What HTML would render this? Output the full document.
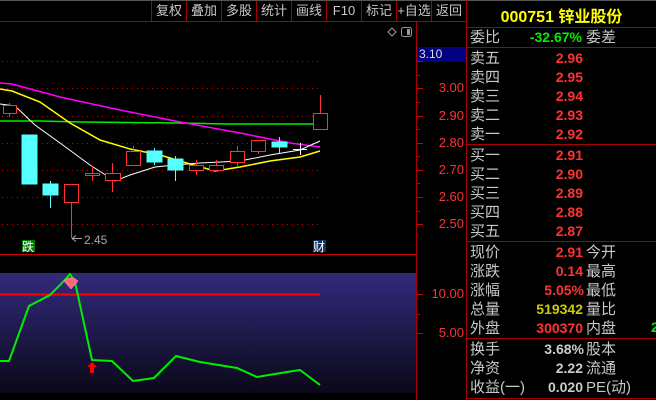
<!DOCTYPE html>
<html><head><meta charset="utf-8"><style>
*{margin:0;padding:0;box-sizing:border-box}
body{width:656px;height:400px;background:#000;overflow:hidden;position:relative;font-family:"Liberation Sans","Noto Sans CJK SC",sans-serif;color:#c8c8c8}
.a{position:absolute;white-space:nowrap}
.tb{position:absolute;top:1px;height:20px;font-size:13px;color:#c8c8c8;line-height:20px;text-align:center;border-left:1px solid #a00}
.l{font-size:15px;color:#c8c8c8;left:470px;line-height:19px}
.r{font-size:14px;font-weight:bold;line-height:19px;text-align:right;width:100px;left:483px;color:#ff3333}
.ax{position:absolute;left:420px;width:44px;text-align:right;color:#ff3333;font-size:13px}
</style></head><body>
<div class="a" style="left:0;top:0;width:656px;height:1px;background:#555"></div>
<div class="a" style="left:0;top:21px;width:466px;height:1px;background:#a00"></div>
<div class="tb" style="left:151px;width:35px">复权</div>
<div class="tb" style="left:186px;width:35px">叠加</div>
<div class="tb" style="left:221px;width:35px">多股</div>
<div class="tb" style="left:256px;width:35px">统计</div>
<div class="tb" style="left:291px;width:35px">画线</div>
<div class="tb" style="left:326px;width:35px">F10</div>
<div class="tb" style="left:361px;width:35px">标记</div>
<div class="tb" style="left:396px;width:35px">+自选</div>
<div class="tb" style="left:431px;width:35px">返回</div>
<div class="a" style="left:466px;top:0;width:1px;height:400px;background:#a00"></div>
<div class="a" style="left:416px;top:21px;width:1px;height:379px;background:#a00"></div>
<div class="a" style="left:0;top:254px;width:416px;height:1px;background:#c00"></div>
<div class="a" style="left:0;top:273px;width:416px;height:120px;background:linear-gradient(#332a7c,#0a0818)"></div>
<div class="a" style="left:417px;top:47px;width:49px;height:15px;background:#000080;color:#ddd;font-size:12px;line-height:15px;padding-left:2px">3.10</div>
<div class="ax" style="top:80px">3.00</div><div class="ax" style="top:108px">2.90</div>
<div class="ax" style="top:135px">2.80</div><div class="ax" style="top:162px">2.70</div>
<div class="ax" style="top:189px">2.60</div><div class="ax" style="top:216px">2.50</div>
<div class="ax" style="top:286px">10.00</div><div class="ax" style="top:325px">5.00</div>
<svg class="a" style="left:0;top:0" width="466" height="400">
<g stroke="#c00" stroke-dasharray="1,4" stroke-width="1">
<line x1="2" y1="61.5" x2="320" y2="61.5"/><line x1="2" y1="88.5" x2="320" y2="88.5"/><line x1="2" y1="116.5" x2="320" y2="116.5"/><line x1="2" y1="143.5" x2="320" y2="143.5"/><line x1="2" y1="170.5" x2="320" y2="170.5"/><line x1="2" y1="197.5" x2="320" y2="197.5"/><line x1="2" y1="224.5" x2="320" y2="224.5"/></g>
<g stroke="#c00"><line x1="417" y1="61.5" x2="423" y2="61.5"/><line x1="417" y1="88.5" x2="423" y2="88.5"/><line x1="417" y1="116.5" x2="423" y2="116.5"/><line x1="417" y1="143.5" x2="423" y2="143.5"/><line x1="417" y1="170.5" x2="423" y2="170.5"/><line x1="417" y1="197.5" x2="423" y2="197.5"/><line x1="417" y1="224.5" x2="423" y2="224.5"/><line x1="417" y1="75.5" x2="420" y2="75.5"/><line x1="417" y1="102.5" x2="420" y2="102.5"/><line x1="417" y1="129.5" x2="420" y2="129.5"/><line x1="417" y1="156.5" x2="420" y2="156.5"/><line x1="417" y1="183.5" x2="420" y2="183.5"/><line x1="417" y1="211.5" x2="420" y2="211.5"/><line x1="417" y1="294.5" x2="423" y2="294.5"/><line x1="417" y1="333.5" x2="423" y2="333.5"/><line x1="417" y1="314.5" x2="420" y2="314.5"/></g>
<polyline fill="none" stroke="#00ee00" stroke-width="1.5" points="0,121 40,121 80,122 180,123 226,124 320,124"/>
<polyline fill="none" stroke="#ff00ff" stroke-width="1.5" points="0,83 12,84 60,97 120,110 180,122 240,133 290,143 320,147"/>
<polyline fill="none" stroke="#ffff00" stroke-width="1.5" points="0,89 12,91 40,102 70,123 100,140 130,149 160,155 190,164 215,171 240,167 270,161 300,157 320,151"/>
<polyline fill="none" stroke="#fff" stroke-width="1" points="0,104 15,106 35,125 60,143 90,165 115,181 130,175 155,167 175,165 200,163 240,161 270,155 300,150 320,141"/>
<g stroke="#ff3333" fill="none">
<line x1="9.5" y1="103" x2="9.5" y2="117"/><rect x="3.5" y="105.5" width="13" height="8" fill="#000"/>
<line x1="71.5" y1="184" x2="71.5" y2="238"/><rect x="64.5" y="184.5" width="14" height="18" fill="#000"/>
<line x1="92.5" y1="166" x2="92.5" y2="181"/><rect x="85.5" y="173.5" width="14" height="2" fill="#000"/>
<line x1="112.5" y1="163" x2="112.5" y2="192"/><rect x="105.5" y="173.5" width="15" height="7" fill="#000"/>
<line x1="133.5" y1="146" x2="133.5" y2="166"/><rect x="126.5" y="151.5" width="14" height="14" fill="#000"/>
<line x1="196.5" y1="160" x2="196.5" y2="175"/><rect x="189.5" y="165.5" width="14" height="5" fill="#000"/>
<line x1="216.5" y1="160" x2="216.5" y2="172"/><rect x="209.5" y="165.5" width="14" height="5" fill="#000"/>
<line x1="237.5" y1="146" x2="237.5" y2="167"/><rect x="230.5" y="151.5" width="14" height="11" fill="#000"/>
<line x1="258.5" y1="146" x2="258.5" y2="154"/><rect x="251.5" y="140.5" width="14" height="11" fill="#000"/>
<line x1="320.5" y1="95" x2="320.5" y2="129"/><rect x="313.5" y="113.5" width="14" height="16" fill="#000"/>
</g>
<g fill="#55ffff" stroke="#55ffff">
<rect x="22" y="135" width="15" height="49"/>
<line x1="50.5" y1="181" x2="50.5" y2="208"/><rect x="43" y="184" width="15" height="11"/>
<line x1="154.5" y1="148" x2="154.5" y2="165"/><rect x="147" y="151" width="15" height="11"/>
<line x1="175.5" y1="156" x2="175.5" y2="181"/><rect x="168" y="159" width="15" height="11"/>
<line x1="279.5" y1="137" x2="279.5" y2="154"/><rect x="272" y="142" width="15" height="5"/>
</g>
<g stroke="#fff"><line x1="293" y1="149.5" x2="307" y2="149.5"/><line x1="300.5" y1="143" x2="300.5" y2="155"/></g>
<line x1="72" y1="238.5" x2="82" y2="238.5" stroke="#aaa"/><path d="M72 238.5 l4 -3 M72 238.5 l4 3" stroke="#aaa" fill="none"/>
<text x="84" y="244" fill="#aaa" font-size="12" font-family="Liberation Sans">2.45</text>
<rect x="22" y="240" width="13" height="12" fill="#007a00"/><text x="22" y="251" fill="#fff" font-size="12" font-family="Noto Sans CJK SC">跌</text>
<rect x="313" y="240" width="13" height="12" fill="#103060"/><text x="313" y="251" fill="#fff" font-size="12" font-family="Noto Sans CJK SC">财</text>
<path d="M388 32 l4 -4 l4 4 l-4 4 z" stroke="#999" fill="none"/>
<rect x="401.5" y="27.5" width="10" height="9" rx="2" stroke="#999" fill="none"/><rect x="407" y="29" width="3" height="6" fill="#999"/>
<line x1="0" y1="294.5" x2="320" y2="294.5" stroke="#ff0000" stroke-width="2"/>
<polyline fill="none" stroke="#00ee00" stroke-width="2" points="0,361 9,361 29,306 50,295 62,283 70,274 75,282 92,360 112,361 133,381 154,378 176,356 200,362 237,368 257,377 287,372 300,370 320,385"/>
<path d="M64 281 l4 -3 h6 l4 3 l-7 8 z" fill="#ff6677" stroke="#ffaabb" stroke-width="0.5"/>
<path d="M92 362 l-5 5 h3 v6 h4 v-6 h3 z" fill="#ff0000"/>
</svg>
<div class="a" style="left:467px;top:3px;width:189px;text-align:center;color:#ffff00;font-size:16px;font-weight:bold">000751 锌业股份</div>
<div class="a" style="left:467px;top:27px;width:189px;height:1px;background:#a00"></div>
<div class="a l" style="top:28px">委比</div>
<div class="a" style="left:520px;top:29px;width:62px;text-align:right;color:#00ee00;font-size:14px;font-weight:bold">-32.67%</div>
<div class="a l" style="left:586px;top:28px">委差</div>
<div class="a" style="left:467px;top:47px;width:189px;height:1px;background:#a00"></div>
<div class="a l" style="top:49px">卖五</div><div class="a r" style="top:49px">2.96</div>
<div class="a l" style="top:68px">卖四</div><div class="a r" style="top:68px">2.95</div>
<div class="a l" style="top:87px">卖三</div><div class="a r" style="top:87px">2.94</div>
<div class="a l" style="top:106px">卖二</div><div class="a r" style="top:106px">2.93</div>
<div class="a l" style="top:125px">卖一</div><div class="a r" style="top:125px">2.92</div>
<div class="a" style="left:467px;top:144px;width:189px;height:1px;background:#a00"></div>
<div class="a l" style="top:146px">买一</div><div class="a r" style="top:146px">2.91</div>
<div class="a l" style="top:165px">买二</div><div class="a r" style="top:165px">2.90</div>
<div class="a l" style="top:184px">买三</div><div class="a r" style="top:184px">2.89</div>
<div class="a l" style="top:203px">买四</div><div class="a r" style="top:203px">2.88</div>
<div class="a l" style="top:222px">买五</div><div class="a r" style="top:222px">2.87</div>
<div class="a" style="left:467px;top:241px;width:189px;height:1px;background:#a00"></div>
<div class="a l" style="top:243px">现价</div><div class="a r" style="top:243px">2.91</div><div class="a l" style="left:586px;top:243px">今开</div>
<div class="a l" style="top:262px">涨跌</div><div class="a r" style="top:262px">0.14</div><div class="a l" style="left:586px;top:262px">最高</div>
<div class="a l" style="top:281px">涨幅</div><div class="a r" style="top:281px;left:484px">5.05%</div><div class="a l" style="left:586px;top:281px">最低</div>
<div class="a l" style="top:300px">总量</div><div class="a r" style="top:300px;color:#cccc00">519342</div><div class="a l" style="left:586px;top:300px">量比</div>
<div class="a l" style="top:319px">外盘</div><div class="a r" style="top:319px">300370</div><div class="a l" style="left:586px;top:319px">内盘</div><div class="a" style="left:651px;top:319px;color:#00ee00;font-size:14px;font-weight:bold">2</div>
<div class="a" style="left:467px;top:338px;width:189px;height:1px;background:#a00"></div>
<div class="a l" style="top:340px">换手</div><div class="a r" style="top:340px;left:484px;color:#ccc">3.68%</div><div class="a l" style="left:586px;top:340px">股本</div>
<div class="a l" style="top:359px">净资</div><div class="a r" style="top:359px;color:#ccc">2.22</div><div class="a l" style="left:586px;top:359px">流通</div>
<div class="a l" style="top:378px">收益(一)</div><div class="a r" style="top:378px;color:#ccc">0.020</div><div class="a l" style="left:586px;top:378px">PE(动)</div>
<div class="a" style="left:467px;top:398px;width:189px;height:1px;background:#a00"></div>
</body></html>
